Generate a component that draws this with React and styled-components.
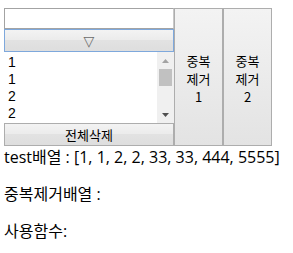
import React from "react";
import styled, { createGlobalStyle } from "styled-components";

const Global = createGlobalStyle`
  html, body { margin: 0; padding: 0; background: #fff; }
  body {
    font-family: "Noto Sans CJK KR", "Noto Sans", sans-serif;
    color: #000;
  }
`;

const Page = styled.div`
  padding: 8px 0 0 4px;
`;

const TopRow = styled.div`
  display: flex;
  align-items: stretch;
`;

const LeftCol = styled.div`
  width: 170px;
  display: flex;
  flex-direction: column;
`;

const TextInput = styled.input`
  box-sizing: border-box;
  width: 170px;
  height: 21px;
  margin: 0;
  border: 1px solid #a3a3a3;
  border-right-color: #c8c8c8;
  outline: none;
  background: #fff;
`;

const btnBg = `linear-gradient(#f3f3f3, #ebebeb 50%, #e2e2e2 50%, #dedede)`;

const DropButton = styled.button`
  box-sizing: border-box;
  height: 23px;
  margin: 0;
  border: 1px solid #7ea8dc;
  background: ${btnBg};
  display: flex;
  align-items: center;
  justify-content: center;
  padding: 0;
  color: #6a6a6a;
  font-family: "DejaVu Sans", sans-serif;
  font-size: 14px;
`;

const ListBox = styled.div`
  display: flex;
  height: 71px;
  background: #fff;
  overflow: hidden;
`;

const Items = styled.div`
  flex: 1;
  padding-left: 4px;
  font-family: "Liberation Sans", Arial, sans-serif;
  font-size: 14px;
  line-height: 17px;
  padding-top: 2px;
`;

const Item = styled.div`
  height: 17px;
`;

const ScrollBar = styled.div`
  width: 17px;
  background: #f0f0f0;
  display: flex;
  flex-direction: column;
  align-items: center;
  box-sizing: border-box;
  padding: 0 2px;
`;

const Arrow = styled.div`
  height: 17px;
  width: 100%;
  display: flex;
  align-items: center;
  justify-content: center;
`;

const Thumb = styled.div`
  width: 13px;
  height: 17px;
  background: #c1c1c1;
`;

const Track = styled.div`
  flex: 1;
`;

const WideButton = styled.button`
  box-sizing: border-box;
  height: 23px;
  margin: 0;
  border: 1px solid #adadad;
  background: ${btnBg};
  font-family: "Noto Sans CJK KR", sans-serif;
  font-size: 13px;
  line-height: 17px;
  color: #000;
  padding: 0;
`;

const TallButton = styled.button`
  box-sizing: border-box;
  width: 49px;
  margin: 0;
  border: 1px solid #adadad;
  background: linear-gradient(#f3f3f3, #e3e3e3);
  font-family: "Noto Sans CJK KR", sans-serif;
  font-size: 13px;
  line-height: 18px;
  color: #000;
  padding: 3px 0 0;
  display: flex;
  align-items: center;
  justify-content: center;
  text-align: center;
`;

const Line = styled.div`
  font-family: "Open Sans", "Noto Sans CJK KR", sans-serif;
  font-size: 16px;
  line-height: 21px;
  margin: ${(p) => (p.$first ? "1px 0 0" : "16px 0 0")};
  white-space: nowrap;
`;

const Tri = ({ up }) => (
  <svg width="7" height="4" viewBox="0 0 7 4">
    <polygon points={up ? "3.5,0 7,4 0,4" : "0,0 7,0 3.5,4"} fill={up ? "#a3a3a3" : "#505050"} />
  </svg>
);

export default function App() {
  return (
    <>
      <Global />
      <Page>
        <TopRow>
          <LeftCol>
            <TextInput />
            <DropButton>▽</DropButton>
            <ListBox>
              <Items>
                <Item>1</Item>
                <Item>1</Item>
                <Item>2</Item>
                <Item>2</Item>
              </Items>
              <ScrollBar>
                <Arrow><Tri up /></Arrow>
                <Thumb />
                <Track />
                <Arrow><Tri /></Arrow>
              </ScrollBar>
            </ListBox>
            <WideButton>전체삭제</WideButton>
          </LeftCol>
          <TallButton>중복<br />제거<br />1</TallButton>
          <TallButton>중복<br />제거<br />2</TallButton>
        </TopRow>
        <Line $first>test배열 : [1, 1, 2, 2, 33, 33, 444, 5555]</Line>
        <Line>중복제거배열 :</Line>
        <Line>사용함수:</Line>
      </Page>
    </>
  );
}
